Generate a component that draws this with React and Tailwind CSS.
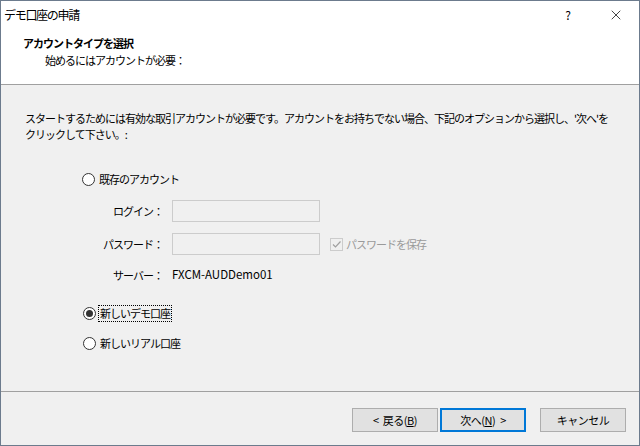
import { X } from 'lucide-react';

function Radio({ checked, label, focused, top }) {
  return (
    <div className={`flex items-center h-[16px] ${top}`}>
      <span className="w-[13px] h-[13px] rounded-full border border-[#333333] bg-white flex items-center justify-center">
        {checked && <span className="w-[7px] h-[7px] rounded-full bg-[#333333]" />}
      </span>
      <span className={`ml-[3px] px-[1px] leading-[15px] ${focused ? 'outline outline-1 outline-dotted outline-black' : ''}`}>{label}</span>
    </div>
  );
}

function Field({ label, children, top }) {
  return (
    <div className={`flex items-center h-[22px] ${top}`}>
      <div className="w-[163px] text-right pr-[1px]">{label}</div>
      <div className="ml-[8px] flex items-center">{children}</div>
    </div>
  );
}

function Btn({ children, primary }) {
  return (
    <button
      className={`w-[86px] h-[24px] bg-[#e1e1e1] flex items-center justify-center tracking-[-0.5px] ${primary ? 'border-2 border-[#0078d7]' : 'border border-[#adadad]'}`}
    >
      {children}
    </button>
  );
}

export default function App() {
  return (
    <div
      className="w-[640px] h-[446px] border border-[#6c7b8d] bg-[#f0f0f0] flex flex-col text-[11px] tracking-[-1px] text-black overflow-hidden"
      style={{ fontFamily: '"Noto Sans CJK JP", "Noto Sans", sans-serif' }}
    >
      <div className="h-[84px] bg-white border-b border-[#a0a0a0] flex flex-col">
        <div className="h-[27px] flex items-center pl-[3px]">
          <span className="text-[12px] tracking-[-1.3px]">デモ口座の申請</span>
          <span className="ml-auto mr-[38px] text-[12px]">?</span>
          <X className="w-[16px] h-[16px] mr-[15px]" strokeWidth={1.1} />
        </div>
        <div className="pl-[22px] mt-[7px] font-bold leading-[16px]">アカウントタイプを選択</div>
        <div className="pl-[44px] mt-[1px] leading-[16px]">始めるにはアカウントが必要：</div>
      </div>

      <div className="flex-1 flex flex-col">
        <div className="pl-[24px] pt-[25px] leading-[16px] pr-[20px]">
          スタートするためには有効な取引アカウントが必要です。アカウントをお持ちでない場合、下記のオプションから選択し、'次へ'を
          <br />
          クリックして下さい。:
        </div>
        <div className="pl-[81px]">
          <Radio top="mt-[29px]" label="既存のアカウント" />
        </div>
        <Field top="mt-[13px]" label="ログイン：">
          <div className="w-[148px] h-[22px] border border-[#cccccc] bg-[#f0f0f0]" />
        </Field>
        <Field top="mt-[11px]" label="パスワード：">
          <div className="w-[148px] h-[22px] border border-[#cccccc] bg-[#f0f0f0]" />
          <span className="ml-[10px] w-[13px] h-[13px] border border-[#cccccc] bg-[#f0f0f0] flex items-center justify-center">
            <svg viewBox="0 0 11 11" className="w-[11px] h-[11px]">
              <path d="M2 5.5 L4.5 8 L9.5 2.5" fill="none" stroke="#a0a0a0" strokeWidth="1.2" />
            </svg>
          </span>
          <span className="ml-[3px] text-[#9a9a9a]">パスワードを保存</span>
        </Field>
        <Field top="mt-[9px]" label="サーバー：">
          <span className="tracking-[0px] text-[11.5px]">FXCM-AUDDemo01</span>
        </Field>
        <div className="pl-[82px]">
          <Radio top="mt-[19px]" checked focused label="新しいデモ口座" />
          <Radio top="mt-[14px]" label="新しいリアル口座" />
        </div>
      </div>

      <div className="h-[54px] border-t border-[#a0a0a0] flex items-start pt-[16px] pl-[351px]">
        <Btn>
          <span>&lt;</span>
          <span className="ml-[4px]">戻る(<span className="underline">B</span>)</span>
        </Btn>
        <div className="ml-[2px]">
          <Btn primary>
            <span>次へ(<span className="underline">N</span>)</span>
            <span className="ml-[5px]">&gt;</span>
          </Btn>
        </div>
        <div className="ml-[14px]">
          <Btn>キャンセル</Btn>
        </div>
      </div>
    </div>
  );
}
